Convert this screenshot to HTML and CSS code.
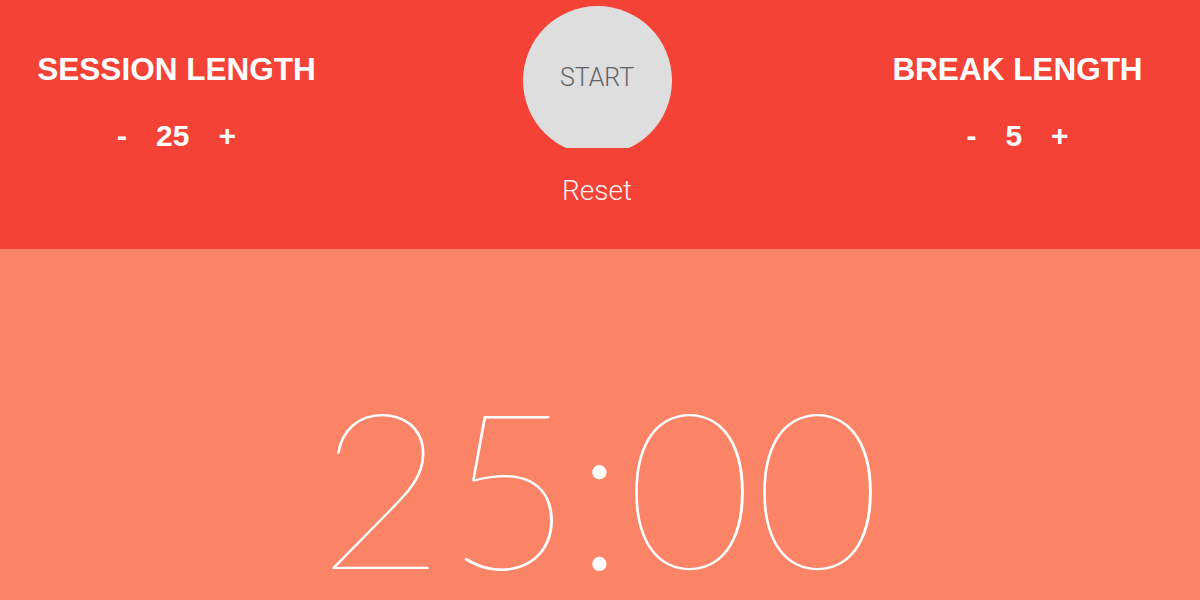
FILE: index.html
```html
<!DOCTYPE html>
<html>
<head>
<meta charset="utf-8">
<link rel="stylesheet" href="styles.css">
</head>
<body>
<div class="app">
  <header class="controls">
    <section class="setting">
      <h2 class="setting-title">SESSION LENGTH</h2>
      <div class="stepper">
        <span class="step">-</span>
        <span class="value">25</span>
        <span class="step">+</span>
      </div>
    </section>
    <section class="center">
      <div class="start-wrap">
        <button class="start">START</button>
      </div>
      <div class="reset">Reset</div>
    </section>
    <section class="setting">
      <h2 class="setting-title">BREAK LENGTH</h2>
      <div class="stepper">
        <span class="step">-</span>
        <span class="value">5</span>
        <span class="step">+</span>
      </div>
    </section>
  </header>
  <main class="timer-area">
    <div class="timer">25:00</div>
  </main>
</div>
</body>
</html>
```

FILE: styles.css
```css
html, body {
  margin: 0;
  padding: 0;
}
body {
  width: 1200px;
  height: 600px;
  overflow: hidden;
  background: #fb8467;
}
.app {
  display: flex;
  flex-direction: column;
  height: 600px;
}
.controls {
  flex-shrink: 0;
  background: #f44336;
  height: 249px;
  display: grid;
  grid-template-columns: 353px 488px 353px;
  padding-right: 6px;
  color: #fff;
}
.setting {
  display: flex;
  flex-direction: column;
  align-items: center;
  padding-top: 51px;
  font-family: "Liberation Sans", Arial, sans-serif;
  font-weight: bold;
}
.setting-title {
  margin: 0;
  font-size: 31.5px;
  line-height: 36px;
  font-weight: bold;
}
.stepper {
  display: flex;
  align-items: baseline;
  gap: 29px;
  margin-top: 32px;
  font-size: 30px;
  line-height: 34px;
}
.center {
  display: flex;
  flex-direction: column;
  align-items: center;
  padding-top: 6px;
}
.start-wrap {
  width: 149px;
  height: 142px;
  overflow: hidden;
}
.start {
  width: 149px;
  height: 149px;
  border-radius: 50%;
  border: none;
  background: #dedede;
  color: #5f6368;
  font-family: Roboto, "Noto Sans", sans-serif;
  font-weight: 300;
  font-size: 25px;
  padding: 0 0 6px 0;
  margin: 0;
}
.reset {
  margin-top: 27px;
  font-family: Roboto, "Noto Sans", sans-serif;
  font-weight: 300;
  font-size: 28px;
  line-height: 32px;
  color: #fdeeee;
}
.timer-area {
  flex: 1;
  display: flex;
  justify-content: center;
  min-height: 0;
}
.timer {
  margin-top: 126px;
  font-family: Lato, Roboto, sans-serif;
  font-weight: 100;
  font-size: 219px;
  line-height: 220px;
  letter-spacing: 1px;
  color: #fff;
}
```
